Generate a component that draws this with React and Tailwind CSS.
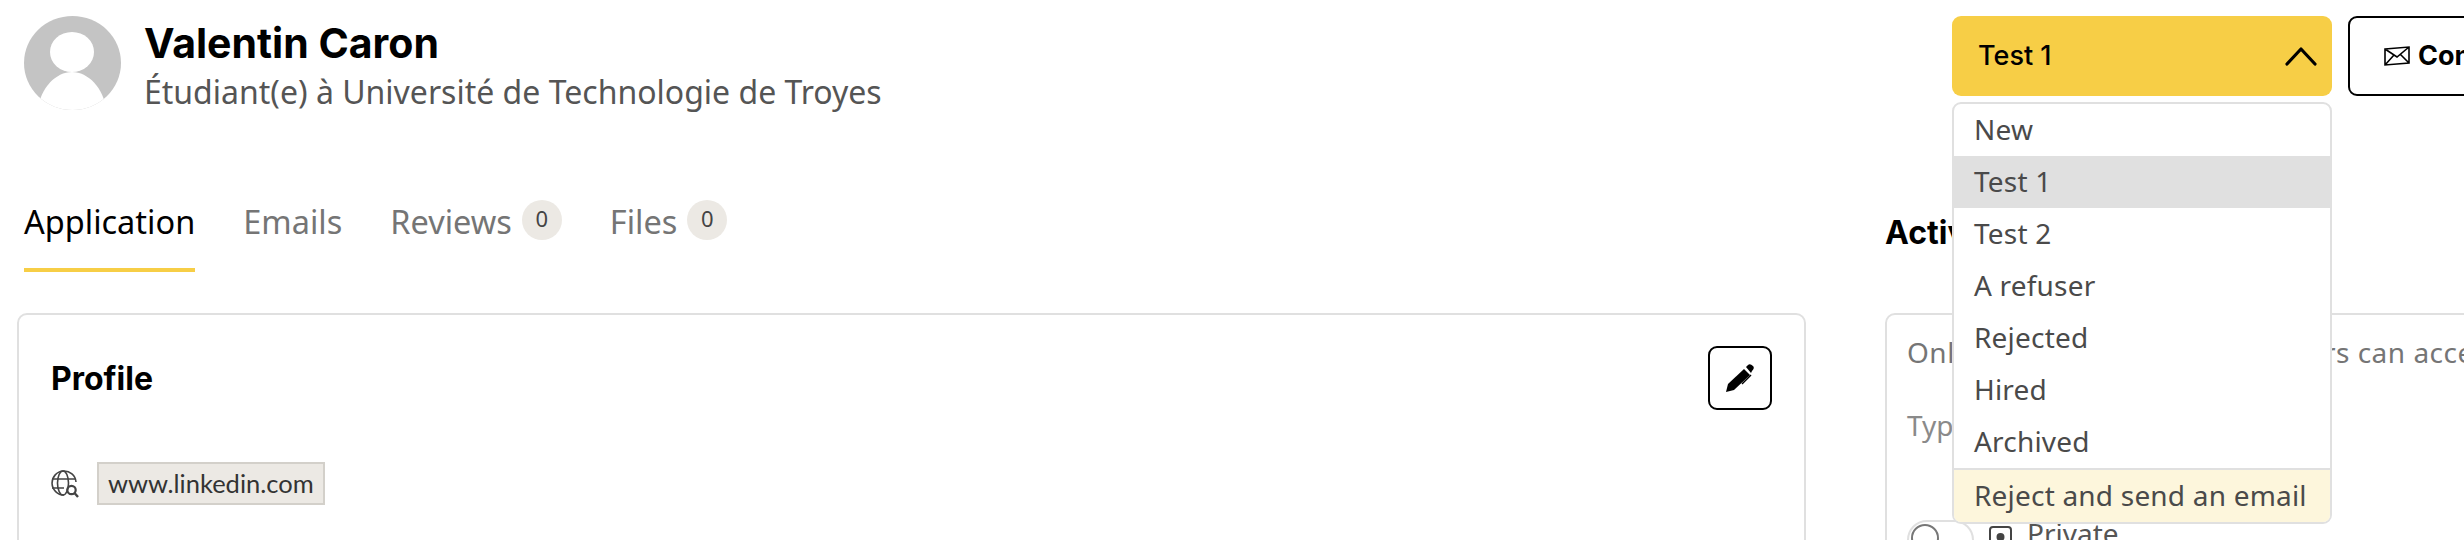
const body = { fontFamily: '"Noto Sans", sans-serif' };
const head = { fontFamily: 'Inter, sans-serif' };

function Avatar() {
  return (
    <svg width="97" height="94" viewBox="0 0 97 94" className="shrink-0">
      <defs>
        <clipPath id="avc"><ellipse cx="48.5" cy="47" rx="48.5" ry="47" /></clipPath>
      </defs>
      <g clipPath="url(#avc)">
        <rect width="97" height="94" fill="#c4c4c4" />
        <ellipse cx="48" cy="36" rx="22" ry="20" fill="#fff" />
        <path d="M14 94 C16 72 32 56 48 56 C64 56 80 72 82 94 Z" fill="#fff" />
      </g>
    </svg>
  );
}

function Tab({ label, count, active }) {
  return (
    <div className="flex flex-col">
      <div className="flex items-start gap-[10px] h-[68px]">
        <span className={`text-[32.5px] leading-[44px] ${active ? 'text-black' : 'text-[#757575]'}`}>{label}</span>
        {count !== undefined && (
          <span className="w-[40px] h-[40px] rounded-full bg-[#ece9e4] text-[#444] text-[22px] leading-[36px] flex justify-center">{count}</span>
        )}
      </div>
      {active && <div className="h-1 bg-[#f7ce46]" />}
    </div>
  );
}

function Item({ children, active }) {
  return (
    <div className={`h-[52px] px-[20px] text-[28px] tracking-[0.2px] leading-[50px] text-[#4a4a4a] ${active ? 'bg-[#e0e0e0]' : ''}`}>{children}</div>
  );
}

export default function App() {
  return (
    <div className="relative w-full h-[540px] overflow-hidden bg-white" style={body}>
      <div className="flex w-[2700px]">
        <div className="w-[1806px] ml-[17px] shrink-0">
          <div className="flex gap-[23px] pl-[7px] pt-[16px] h-[200px]">
            <Avatar />
            <div>
              <div className="text-[41px] leading-[54px] font-bold text-black" style={head}>Valentin Caron</div>
              <div className="text-[32px] leading-[42px] mt-[1px] text-[#555]">Étudiant(e) à Université de Technologie de Troyes</div>
            </div>
          </div>
          <div className="flex gap-[48px] pl-[7px] h-[112px]">
            <Tab label="Application" active />
            <Tab label="Emails" />
            <Tab label="Reviews" count={0} />
            <Tab label="Files" count={0} />
          </div>
          <div className="mt-[1px] h-[400px] w-[1789px] rounded-[10px] border-2 border-[#e0e0e0] px-[33px] pt-[31px]">
            <div className="flex items-start justify-between">
              <div className="text-[32px] leading-[64px] font-bold text-black mt-[1px] -ml-[1px]" style={head}>Profile</div>
              <div className="w-[64px] h-[64px] -mr-[1px] rounded-[9px] border-2 border-black flex items-center justify-center">
                <svg width="30" height="30" viewBox="0 0 30 30">
                  <path d="M1 29 L3 21 L19 6 L25 12 L9 27 Z" fill="#000" />
                  <path d="M21 4 L23 2 Q25 0 28 3 Q30 5 27 8 L26 10 Z" fill="#000" />
                  <path d="M26 12 L17 21" stroke="#000" strokeWidth="1.5" fill="none" />
                </svg>
              </div>
            </div>
            <div className="flex items-center gap-[17px] mt-[51px] -ml-[2px]">
              <svg width="30" height="28" viewBox="0 0 30 28" fill="none" stroke="#444" strokeWidth="1.6" className="shrink-0">
                <path d="M14 25 A12 12 0 1 1 26 12" />
                <ellipse cx="13" cy="13" rx="5.5" ry="12" />
                <path d="M2 9 H25 M2 18 H14" />
                <circle cx="21.5" cy="20" r="4.2" strokeWidth="2.2" />
                <path d="M24.5 23 L28 27" strokeWidth="2.4" />
              </svg>
              <div className="h-[43px] px-[9px] border-2 border-[#d3d0ca] bg-[#ece9e4] text-[25.5px] leading-[38px] text-[#333]" style={{ fontFamily: 'Lato, sans-serif' }}>www.linkedin.com</div>
            </div>
          </div>
        </div>

        <div className="ml-[62px] w-[800px] shrink-0">
          <div className="h-[202px]" />
          <div className="text-[32px] leading-[62px] font-bold text-black" style={head}>Activity</div>
          <div className="mt-[49px] h-[300px] rounded-[10px] border-2 border-[#e0e0e0] px-[20px] pt-[17px]">
            <div className="text-[28px] tracking-[0.5px] leading-[40px] text-[#757575] whitespace-nowrap">Only hiring groups collaborators can access</div>
            <div className="text-[28px] leading-[40px] mt-[33px] text-[#8a8a8a]">Type your comment</div>
            <div className="flex gap-[15px] mt-[75px]">
              <div className="w-[67px] h-[40px] rounded-full border-2 border-[#e0e0e0] p-[2px]">
                <div className="w-[28px] h-[28px] rounded-full border-2 border-[#777]" />
              </div>
              <svg width="23" height="26" viewBox="0 0 23 26" fill="none" stroke="#444" strokeWidth="2" className="mt-[6px] shrink-0">
                <rect x="1" y="1" width="21" height="24" rx="3" />
                <circle cx="11.5" cy="11" r="3" fill="#444" />
              </svg>
              <span className="text-[28px] leading-[40px] -mt-[7px] text-[#555]">Private</span>
            </div>
          </div>
        </div>
      </div>

      <div className="absolute top-[16px] left-[1952px] flex gap-[16px]">
        <div className="w-[380px] h-[80px] rounded-[9px] bg-[#f7ce46] flex items-center justify-between pl-[26px] pr-[15px]">
          <span className="text-[27px] font-medium text-black" style={head}>Test 1</span>
          <svg width="32" height="20" viewBox="0 0 32 20" fill="none" stroke="#000" strokeWidth="3.2" strokeLinecap="round" strokeLinejoin="round">
            <path d="M2 18 L16 3 L30 18" />
          </svg>
        </div>
        <div className="w-[200px] h-[80px] rounded-[9px] border-2 border-black flex items-center gap-[8px] pl-[34px] shrink-0">
          <svg width="26" height="20" viewBox="0 0 26 20" fill="none" stroke="#000" strokeWidth="1.6" className="shrink-0">
            <path d="M1 3 L25 1 V17 L1 19 Z M1 3 L13 11 L25 1 M1 19 L10 9 M25 17 L16 8" />
          </svg>
          <span className="text-[27px] font-bold text-black" style={head}>Contact</span>
        </div>
      </div>

      <div className="absolute top-[102px] left-[1952px] w-[380px] rounded-[9px] border-2 border-[#e0e0e0] bg-white overflow-hidden">
        <Item>New</Item>
        <Item active>Test 1</Item>
        <Item>Test 2</Item>
        <Item>A refuser</Item>
        <Item>Rejected</Item>
        <Item>Hired</Item>
        <Item>Archived</Item>
        <div className="border-t-2 border-[#e0e0e0] bg-[#fdf6dc] h-[54px] px-[20px] text-[28px] tracking-[0.2px] leading-[50px] text-[#4a4a4a]">Reject and send an email</div>
      </div>
    </div>
  );
}
